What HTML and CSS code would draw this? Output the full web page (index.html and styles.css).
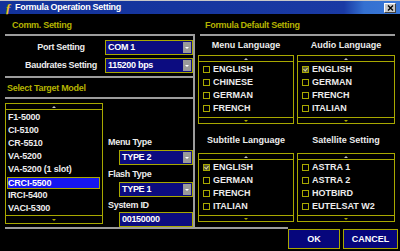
FILE: index.html
```html
<!DOCTYPE html>
<html lang="en">
<head>
    <meta charset="UTF-8">
    <meta name="viewport" content="width=device-width, initial-scale=1.0">
    <title>Formula Operation Setting</title>
    <link rel="stylesheet" href="styles.css">
</head>
<body>
    <div class="window">
        <div class="titlebar">
            <span class="app-icon">ƒ</span>
            <span class="title-text">Formula Operation Setting</span>
            <span class="close-btn">
                <svg width="7" height="6" viewBox="0 0 7 6">
                    <path d="M1 0.5 L6 5.5 M6 0.5 L1 5.5" stroke="#000" stroke-width="1.4"/>
                </svg>
            </span>
        </div>

        <div class="main">
            <!-- left side: communication + model -->
            <div class="left-panel">
                <div class="section-title">Comm. Setting</div>
                <div class="rule"></div>

                <div class="setting-row">
                    <span class="setting-label">Port Setting</span>
                    <div class="combo">
                        <span class="combo-value">COM 1</span>
                        <span class="combo-btn"></span>
                    </div>
                </div>
                <div class="setting-row">
                    <span class="setting-label">Baudrates Setting</span>
                    <div class="combo">
                        <span class="combo-value">115200 bps</span>
                        <span class="combo-btn"></span>
                    </div>
                </div>

                <div class="rule rule-wide"></div>
                <div class="section-title section-title-tight">Select Target Model</div>
                <div class="rule"></div>

                <div class="model-area">
                    <div class="listbox model-list">
                        <div class="scroll-row"><span class="arrow-up"></span></div>
                        <ul class="list-items">
                            <li>F1-5000</li>
                            <li>CI-5100</li>
                            <li>CR-5510</li>
                            <li>VA-5200</li>
                            <li>VA-5200 (1 slot)</li>
                            <li class="selected">CRCI-5500</li>
                            <li>IRCI-5400</li>
                            <li>VACI-5300</li>
                        </ul>
                        <div class="scroll-row scroll-row-bottom"><span class="arrow-down"></span></div>
                    </div>

                    <div class="model-options">
                        <div class="option-label">Menu Type</div>
                        <div class="combo combo-small">
                            <span class="combo-value">TYPE 2</span>
                            <span class="combo-btn"></span>
                        </div>
                        <div class="option-label">Flash Type</div>
                        <div class="combo combo-small">
                            <span class="combo-value">TYPE 1</span>
                            <span class="combo-btn"></span>
                        </div>
                        <div class="option-label option-label-id">System ID</div>
                        <div class="combo combo-small">
                            <span class="combo-value">00150000</span>
                        </div>
                    </div>
                </div>
            </div>

            <div class="divider"></div>

            <!-- right side: default language / satellite -->
            <div class="right-panel">
                <div class="section-title section-title-right">Formula Default Setting</div>
                <div class="rule rule-right"></div>

                <div class="defaults-grid">
                    <div class="group">
                        <div class="group-title">Menu Language</div>
                        <div class="listbox check-list">
                            <div class="scroll-row"><span class="arrow-up"></span></div>
                            <ul class="list-items">
                                <li><span class="checkbox"></span>ENGLISH</li>
                                <li><span class="checkbox"></span>CHINESE</li>
                                <li><span class="checkbox"></span>GERMAN</li>
                                <li><span class="checkbox"></span>FRENCH</li>
                            </ul>
                            <div class="scroll-row"><span class="arrow-down"></span></div>
                        </div>
                    </div>
                    <div class="group">
                        <div class="group-title">Audio Language</div>
                        <div class="listbox check-list">
                            <div class="scroll-row"><span class="arrow-up"></span></div>
                            <ul class="list-items">
                                <li><span class="checkbox checked"></span>ENGLISH</li>
                                <li><span class="checkbox"></span>GERMAN</li>
                                <li><span class="checkbox"></span>FRENCH</li>
                                <li><span class="checkbox"></span>ITALIAN</li>
                            </ul>
                            <div class="scroll-row"><span class="arrow-down"></span></div>
                        </div>
                    </div>
                    <div class="group">
                        <div class="group-title group-title-low">Subtitle Language</div>
                        <div class="listbox check-list">
                            <div class="scroll-row"><span class="arrow-up"></span></div>
                            <ul class="list-items">
                                <li><span class="checkbox checked"></span>ENGLISH</li>
                                <li><span class="checkbox"></span>GERMAN</li>
                                <li><span class="checkbox"></span>FRENCH</li>
                                <li><span class="checkbox"></span>ITALIAN</li>
                            </ul>
                            <div class="scroll-row"><span class="arrow-down"></span></div>
                        </div>
                    </div>
                    <div class="group">
                        <div class="group-title group-title-low">Satellite Setting</div>
                        <div class="listbox check-list">
                            <div class="scroll-row"><span class="arrow-up"></span></div>
                            <ul class="list-items">
                                <li><span class="checkbox"></span>ASTRA 1</li>
                                <li><span class="checkbox"></span>ASTRA 2</li>
                                <li><span class="checkbox"></span>HOTBIRD</li>
                                <li><span class="checkbox"></span>EUTELSAT W2</li>
                            </ul>
                            <div class="scroll-row"><span class="arrow-down"></span></div>
                        </div>
                    </div>
                </div>
            </div>
        </div>

        <div class="footer">
            <div class="footer-rule"></div>
            <button class="btn btn-ok">OK</button>
            <button class="btn btn-cancel">CANCEL</button>
        </div>
    </div>
</body>
</html>
```

FILE: styles.css
```css
* {
    margin: 0;
    padding: 0;
    box-sizing: border-box;
}

body {
    background: #000;
    font-family: "Liberation Sans", Arial, sans-serif;
    font-size: 9px;
    font-weight: bold;
    letter-spacing: -0.3px;
    color: #ececec;
}

.window {
    width: 400px;
    height: 251px;
    display: flex;
    flex-direction: column;
    overflow: hidden;
}

/* title bar */
.titlebar {
    height: 14px;
    border-top: 1px solid #c8c8c8;
    background: linear-gradient(to right, #12329a 0%, #1a3aa4 86%, #3470d0 91%, #3a78d8 100%);
    display: flex;
    align-items: center;
    padding-left: 3px;
    color: #fff;
}

.app-icon {
    width: 10px;
    font-family: "Liberation Serif", serif;
    font-style: italic;
    font-size: 13px;
    line-height: 13px;
    color: #e8c020;
    text-align: center;
}

.title-text {
    margin-left: 2px;
    line-height: 13px;
}

.close-btn {
    margin-left: auto;
    margin-right: 4px;
    width: 12px;
    height: 10px;
    background: #c8c8c8;
    border: 1px solid;
    border-color: #fff #404040 #404040 #fff;
    display: flex;
    align-items: center;
    justify-content: center;
}

/* main area */
.main {
    flex: 1;
    display: flex;
}

.left-panel {
    width: 193px;
    padding: 5px 0 0 5px;
    display: flex;
    flex-direction: column;
}

.divider {
    width: 2px;
    margin-top: 20px;
    background: #9c9c9c;
}

.right-panel {
    flex: 1;
    padding-top: 5px;
}

.section-title {
    color: #b4b400;
    line-height: 12px;
    padding-left: 7px;
}

.section-title-tight {
    margin-top: 4px;
    padding-left: 2px;
}

.section-title-right {
    padding-left: 10px;
}

.rule {
    height: 2px;
    margin-top: 3px;
    background: #9c9c9c;
}

.rule-right {
    margin: 3px 5px 0;
}

/* comm settings */
.setting-row {
    display: flex;
    margin-top: 4px;
}

.setting-row + .setting-row {
    margin-top: 3px;
}

.setting-label {
    width: 100px;
    padding-left: 12px;
    text-align: center;
    line-height: 15px;
}

.combo {
    flex: 1;
    height: 15px;
    display: flex;
    border: 1px solid #a8a800;
    background: #0c0c80;
}

.combo-value {
    flex: 1;
    padding-left: 2px;
    line-height: 13px;
    color: #fff;
}

.combo-btn {
    width: 8px;
    margin: 1px;
    background: #9a9a9a;
    display: flex;
    align-items: center;
    justify-content: center;
}

.combo-btn::after {
    content: "";
    border-left: 2px solid transparent;
    border-right: 2px solid transparent;
    border-top: 2px solid #fff;
}

/* model list + options */
.model-area {
    flex: 1;
    display: flex;
    margin-top: 4px;
}

.listbox {
    border: 1px solid #a8a800;
    display: flex;
    flex-direction: column;
}

.model-list {
    width: 98px;
    height: 121px;
}

.scroll-row {
    height: 6px;
    display: flex;
    align-items: center;
    justify-content: center;
    border-bottom: 1px solid #a8a800;
}

.scroll-row:last-child {
    border-bottom: none;
    border-top: 1px solid #a8a800;
}

.scroll-row-bottom {
    height: 8px;
}

.arrow-up {
    border-left: 2px solid transparent;
    border-right: 2px solid transparent;
    border-bottom: 2px solid #c0c0c0;
}

.arrow-down {
    border-left: 2px solid transparent;
    border-right: 2px solid transparent;
    border-top: 2px solid #a8a800;
}

.list-items {
    list-style: none;
    flex: 1;
    padding: 1px 0 2px;
}

.list-items li {
    height: 13px;
    line-height: 13px;
    display: flex;
    align-items: center;
    letter-spacing: 0;
}

.model-list .list-items {
    padding: 1px 0 0;
}

.model-list li {
    padding-left: 2px;
    letter-spacing: -0.2px;
}

.model-list li.selected {
    height: 12px;
    margin: 1px 2px 0 1px;
    padding-left: 0;
    border: 1px solid #a8a800;
    background: #1616f0;
    color: #fff;
}

.model-options {
    flex: 1;
    display: flex;
    flex-direction: column;
    justify-content: flex-end;
    margin-left: 5px;
}

.option-label {
    line-height: 12px;
    margin-bottom: 2px;
}

.combo-small {
    flex: none;
    margin-left: 11px;
    margin-bottom: 3px;
}

.combo-small:last-child {
    margin-bottom: 0;
}

.option-label-id {
    margin-top: -1px;
    margin-bottom: 1px;
}

/* defaults grid */
.defaults-grid {
    display: grid;
    grid-template-columns: 96px 98px;
    column-gap: 3px;
    padding-left: 3px;
}

.group-title {
    text-align: center;
    line-height: 12px;
    padding: 3px 0 4px;
    letter-spacing: 0;
}

.group-title-low {
    padding: 10px 0 7px;
}

.check-list {
    height: 69px;
}

.check-list li {
    padding-left: 4px;
}

.checkbox {
    width: 7px;
    height: 7px;
    margin-right: 3px;
    border: 1px solid #a8a800;
    position: relative;
}

.checkbox.checked {
    background: #5c5c38;
}

.checkbox.checked::after {
    content: "";
    position: absolute;
    left: 1px;
    top: 0;
    width: 2px;
    height: 3px;
    border-right: 1px solid #d8d890;
    border-bottom: 1px solid #d8d890;
    transform: rotate(40deg);
}

/* footer */
.footer {
    height: 24px;
    display: flex;
    align-items: flex-start;
    padding: 0 2px 0 5px;
}

.footer-rule {
    flex: 1;
    height: 2px;
    background: #9c9c9c;
}

.btn {
    height: 20px;
    margin-top: 2px;
    border: 1px solid #a8a800;
    background: #06067c;
    color: #fff;
    font: inherit;
    letter-spacing: 0;
}

.btn-ok {
    width: 52px;
}

.btn-cancel {
    width: 55px;
    margin-left: 3px;
}
```
